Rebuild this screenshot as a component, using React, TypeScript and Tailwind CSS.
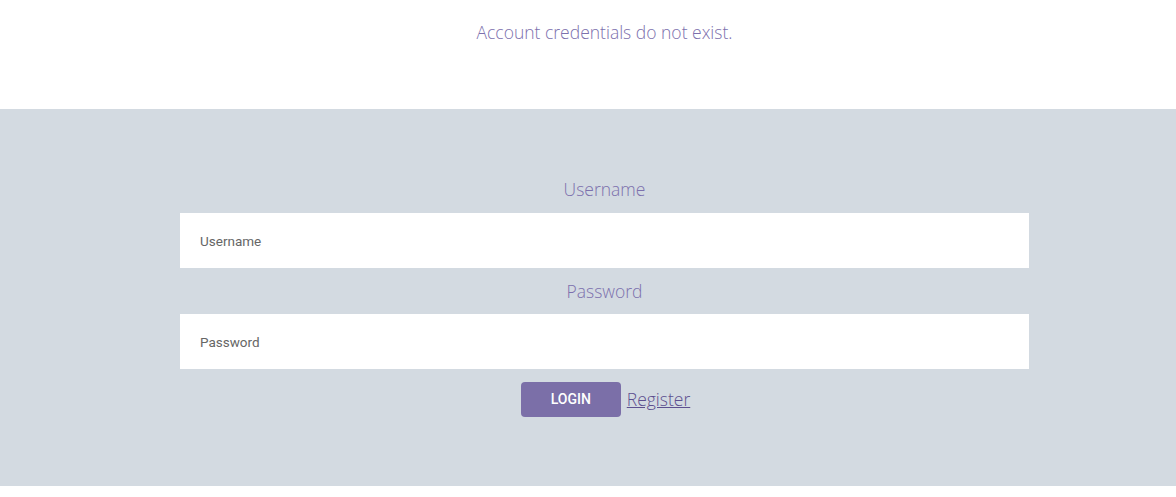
export default function App() {
  return (
    <div className="min-h-[497px] bg-white pl-[33px] font-['Open_Sans',sans-serif]">
      <div className="flex h-[109px] justify-center pt-[20px]">
        <p className="text-[17.5px] font-light leading-6 text-[#7c70ad]">Account credentials do not exist.</p>
      </div>
      <form
        className="-ml-[33px] flex h-[377px] flex-col items-center bg-[#d3dae1] pl-[33px] pt-[67px]"
        onSubmit={(e) => e.preventDefault()}
      >
        <label className="mb-[11px] text-[17.5px] font-light leading-[26px] text-[#7c70ad]">Username</label>
        <input
          className="h-[55px] w-[849px] bg-white px-5 font-['Roboto',sans-serif] text-[13.5px] text-[#555] outline-none placeholder:text-[#666]"
          placeholder="Username"
        />
        <label className="my-[10px] text-[17.5px] font-light leading-[26px] text-[#7c70ad]">Password</label>
        <input
          type="password"
          className="h-[55px] w-[849px] bg-white px-5 font-['Roboto',sans-serif] text-[13.5px] text-[#555] outline-none placeholder:text-[#666]"
          placeholder="Password"
        />
        <div className="mt-[13px] flex items-center gap-[6px] pl-[2px]">
          <button
            type="submit"
            className="h-[35px] w-[100px] rounded-[4px] bg-[#7b6fa8] font-['Roboto',sans-serif] text-[14px] font-medium text-white"
          >
            LOGIN
          </button>
          <a href="#" className="text-[17.5px] font-light text-[#5d4f8f] underline">
            Register
          </a>
        </div>
      </form>
    </div>
  )
}
